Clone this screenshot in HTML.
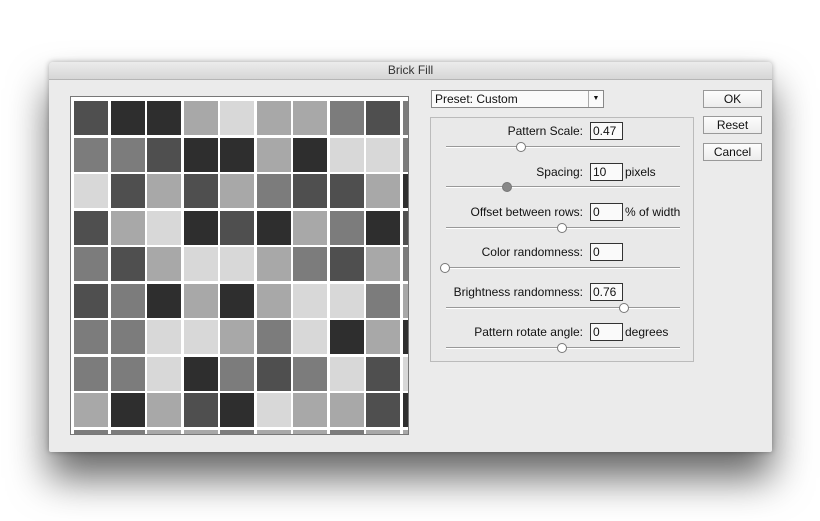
<!DOCTYPE html>
<html><head><style>
body{margin:0;width:820px;height:521px;background:#fff;position:relative;overflow:hidden;font-family:"Liberation Sans",sans-serif;font-size:12px;color:#111}
.dlg{position:absolute;left:49px;top:62px;width:723px;height:390px;background:#ebebeb;box-shadow:0 26px 40px rgba(0,0,0,.6),0 0 6px rgba(0,0,0,.3);border-radius:4px 4px 2px 2px}
.title{height:17px;border-bottom:1px solid #b5b5b5;background:linear-gradient(#ececec,#d6d6d6);text-align:center;font-size:12px;line-height:17px;color:#333;border-radius:4px 4px 0 0}
.prev{position:absolute;left:70px;top:96px;width:337px;height:337px;border:1px solid #777;background:#fff;overflow:hidden}
.t{position:absolute;width:34px;height:34px}
.dd{position:absolute;left:431px;top:90px;width:168px;height:16px;border:1px solid #888;background:#fafafa;line-height:16px;padding-left:3px;box-sizing:content-box}
.dd .a{position:absolute;right:0;top:0;width:14px;height:16px;border-left:1px solid #aaa;font-size:7px;text-align:center;line-height:16px}
.btn{position:absolute;left:703px;width:57px;height:16px;border:1px solid #999;background:linear-gradient(#fdfdfd,#ececec);text-align:center;line-height:16px;font-size:12px}
.panel{position:absolute;left:430px;top:117px;width:262px;height:243px;border:1px solid #bbb;background:#e9e9e9}
.lbl{position:absolute;right:238px;text-align:right;white-space:nowrap}
.in{position:absolute;left:590px;width:29px;height:16px;border:1px solid #333;background:#fafafa;line-height:16px;padding-left:2px}
.un{position:absolute;left:625px}
.sl{position:absolute;left:446px;width:234px;height:1px;background:#999;border-bottom:1px solid #fff}
.k{position:absolute;width:8px;height:8px;border-radius:50%;border:1px solid #777;background:#fff}
</style></head><body>
<div class="dlg"><div class="title">Brick Fill</div></div>
<div class="prev" id="p"></div>
<div class="dd">Preset: Custom<div class="a">▼</div></div>
<div class="btn" style="top:90px">OK</div>
<div class="btn" style="top:116px">Reset</div>
<div class="btn" style="top:143px">Cancel</div>
<div class="panel"></div>

<div class="lbl" style="top:124px;right:237px">Pattern Scale:</div><div class="in" style="top:122px">0.47</div>
<div class="sl" style="top:146px"></div><div class="k" style="left:516px;top:142px"></div>

<div class="lbl" style="top:165px;right:237px">Spacing:</div><div class="in" style="top:163px">10</div><div class="un" style="top:165px">pixels</div>
<div class="sl" style="top:186px"></div><div class="k" style="left:502px;top:182px;background:#888"></div>

<div class="lbl" style="top:205px;right:237px">Offset between rows:</div><div class="in" style="top:203px">0</div><div class="un" style="top:205px">% of width</div>
<div class="sl" style="top:227px"></div><div class="k" style="left:557px;top:223px"></div>

<div class="lbl" style="top:245px;right:237px">Color randomness:</div><div class="in" style="top:243px">0</div>
<div class="sl" style="top:267px"></div><div class="k" style="left:440px;top:263px"></div>

<div class="lbl" style="top:285px;right:237px">Brightness randomness:</div><div class="in" style="top:283px">0.76</div>
<div class="sl" style="top:307px"></div><div class="k" style="left:619px;top:303px"></div>

<div class="lbl" style="top:325px;right:237px">Pattern rotate angle:</div><div class="in" style="top:323px">0</div><div class="un" style="top:325px">degrees</div>
<div class="sl" style="top:347px"></div><div class="k" style="left:557px;top:343px"></div>

<script>
var rows=["MDDLWLLGMG","GGMDDLDWWG","WMLMLGMMLD","MLWDMDLGDM","GMLWWLGML G","MGDLDLWWGL","GGWWLGWDLD","GGWDGMGWMW","LDLMDWLLMD","GGLLGLLGLL"];
var c={D:"#2e2e2e",M:"#4f4f4f",G:"#7c7c7c",L:"#a8a8a8",W:"#d8d8d8"," ":"#7c7c7c"};
var h="";
for(var r=0;r<10;r++){var s=rows[r].replace(" ","");for(var i=0;i<10;i++){h+='<div class="t" style="left:'+(3+i*36.5)+'px;top:'+(4+r*36.5)+'px;background:'+c[s[i]||"G"]+'"></div>';}}
document.getElementById("p").innerHTML=h;
</script>
</body></html>
